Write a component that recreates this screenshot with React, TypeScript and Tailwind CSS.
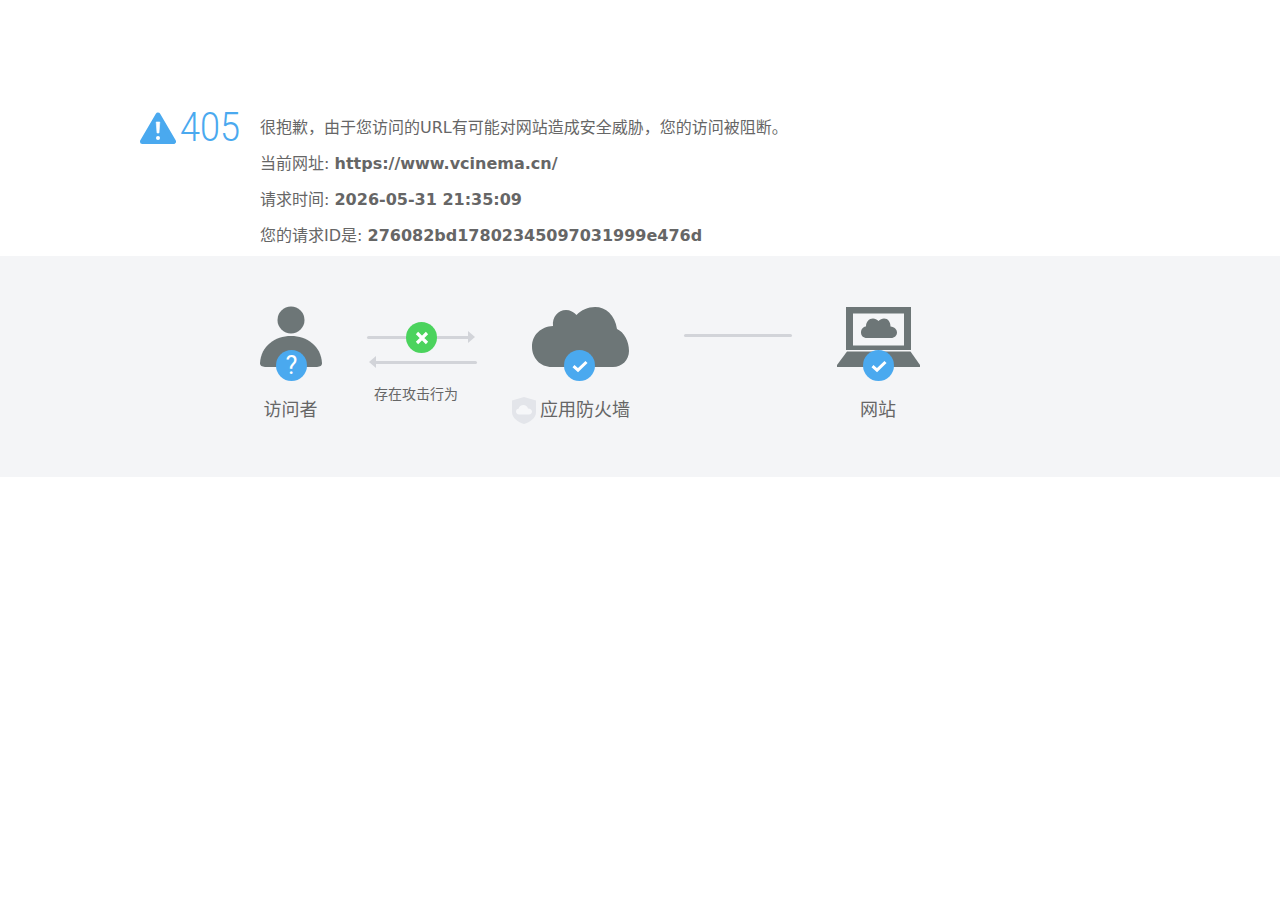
import React from "react";

const FONT = "font-['DejaVu_Sans','Noto_Sans_CJK_SC',sans-serif]";

function Badge({ kind }: { kind: "ok" | "ask" | "deny" }) {
  const bg = kind === "deny" ? "bg-[#4bd35d]" : "bg-[#4aa9ef]";
  return (
    <div className={`absolute flex h-[31px] w-[31px] items-center justify-center rounded-full ${bg}`}>
      {kind === "ask" && <span className="font-['Roboto',sans-serif] text-[25px] font-normal leading-none text-white">?</span>}
      {kind === "ok" && (
        <svg width="18" height="14" viewBox="0 0 18 14" fill="none">
          <path d="M2.5 7.2 L7 11.2 L15.5 3" stroke="#fff" strokeWidth="3" />
        </svg>
      )}
      {kind === "deny" && (
        <svg width="14" height="14" viewBox="0 0 14 14" fill="none">
          <path d="M2 2 L12 12 M12 2 L2 12" stroke="#fff" strokeWidth="3.2" />
        </svg>
      )}
    </div>
  );
}

function Warning() {
  return (
    <svg width="36" height="32" viewBox="0 0 36 32" className="shrink-0">
      <path d="M18 3 L33.5 29.5 H2.5 Z" fill="#4aa9ef" stroke="#4aa9ef" strokeWidth="5" strokeLinejoin="round" />
      <path d="M16.2 10 H19.8 L19 21 H17 Z" fill="#fff" stroke="#fff" strokeWidth="0.6" strokeLinejoin="round" />
      <circle cx="18" cy="26" r="2" fill="#fff" />
    </svg>
  );
}

function Person() {
  return (
    <svg width="62" height="61" viewBox="0 0 62 61" className="block">
      <circle cx="31" cy="14" r="13.5" fill="#6d7677" />
      <path d="M0 57 C1 40 15 30 31 30 C47 30 61 40 62 57 C62 60 60 60.5 57 61 H5 C2 60.5 0 60 0 57 Z" fill="#6d7677" />
    </svg>
  );
}

function Cloud() {
  return (
    <svg width="97" height="60" viewBox="0 0 97 60" className="block">
      <path
        d="M20 60 C8 60 0 51 0 39.5 C0 28 9 19.5 21 19 C20 10 26 3 34 3 C38 3 42 5 44.5 8 C49 3 56 0 63 0 C74 0 83 8 85 22 C92 25 97 34 97 44 C97 53 90 60 81 60 Z"
        fill="#6d7677"
      />
    </svg>
  );
}

function Laptop() {
  return (
    <svg width="83" height="60" viewBox="0 0 83 60" className="block">
      <path d="M9 0 H74 V43 H9 Z" fill="#6d7677" />
      <rect x="16" y="6.5" width="51" height="32" fill="#f4f5f7" />
      <path
        d="M30 31 C26 31 24 28.5 24 25.5 C24 22 26.5 19.5 29 19.5 C29 15 32 11.5 36 11.5 C38 11.5 40 12.5 41.5 14 C43 12.5 45 11.5 47 11.5 C51 11.5 53.5 15 53.5 19.5 C57.5 20 60 22.5 60 25.5 C60 28.5 57.5 31 54 31 Z"
        fill="#6d7677"
      />
      <path d="M10 44.5 H73.5 L83 58 V60 H0 V58 Z" fill="#6d7677" />
    </svg>
  );
}

function Shield() {
  return (
    <svg width="24" height="27" viewBox="0 0 24 27" className="block">
      <path d="M12 0 L24 3.5 V15 C24 21 18 25 12 27 C6 25 0 21 0 15 V3.5 Z" fill="#e3e5ea" />
      <path
        d="M7 17.5 C5 17.5 4 16 4 14.5 C4 13 5 12 6.5 11.8 C7 9.5 9 8 11.5 8 C13.5 8 15.5 9.3 16 11.5 C18.5 11.5 20 13 20 14.5 C20 16 19 17.5 17 17.5 Z"
        fill="#f6f7f9"
      />
    </svg>
  );
}

function Arrows() {
  return (
    <div className="w-[110px]">
      <div className="relative flex h-[62px] flex-col">
        <div className="mt-[25px] flex h-[12px] w-[108px] items-center">
          <div className="h-[3px] flex-1 rounded-l-sm bg-[#d2d4d9]" />
          <div className="h-0 w-0 border-y-[6px] border-l-[7px] border-y-transparent border-l-[#d2d4d9]" />
        </div>
        <div className="ml-[2px] mt-[13px] flex h-[12px] w-[108px] items-center">
          <div className="h-0 w-0 border-y-[6px] border-r-[7px] border-y-transparent border-r-[#d2d4d9]" />
          <div className="h-[3px] flex-1 rounded-r-sm bg-[#d2d4d9]" />
        </div>
        <div className="absolute left-[39px] top-[16px]">
          <Badge kind="deny" />
        </div>
      </div>
      <p className="mt-[14px] pr-[12px] text-center text-sm leading-[24px] text-[#666]">存在攻击行为</p>
    </div>
  );
}

export default function App() {
  return (
    <div className={`min-h-[900px] bg-white text-[#666] ${FONT}`}>
      <div className="flex pl-[140px] pt-[110px]">
        <div className="flex h-9 w-[120px] shrink-0 items-center gap-[4px] text-[#4aa9ef]">
          <Warning />
          <span className="origin-left scale-x-[0.9] font-['Roboto',sans-serif] text-[40px] font-light leading-none">405</span>
        </div>
        <div className="text-base leading-9">
          <div>很抱歉，由于您访问的URL有可能对网站造成安全威胁，您的访问被阻断。</div>
          <div>当前网址: <b>https://www.vcinema.cn/</b></div>
          <div>请求时间: <b>2026-05-31 21:35:09</b></div>
          <div>您的请求ID是: <b>276082bd17802345097031999e476d</b></div>
        </div>
      </div>

      <div className="mt-[2px] flex h-[221px] bg-[#f4f5f7] pl-[260px] pt-[50px]">
        <div className="w-[62px]">
          <div className="relative">
            <Person />
            <div className="absolute left-[16px] top-[44px]"><Badge kind="ask" /></div>
          </div>
          <p className="mt-[29px] whitespace-nowrap pr-px text-center text-lg leading-[28px]">访问者</p>
        </div>

        <div className="ml-[45px]"><Arrows /></div>

        <div className="ml-[55px] w-[97px]">
          <div className="relative pt-px">
            <Cloud />
            <div className="absolute left-[32px] top-[44px]"><Badge kind="ok" /></div>
          </div>
          <div className="-ml-[20px] mt-[29px] flex w-[118px] items-center gap-1">
            <Shield />
            <span className="whitespace-nowrap text-lg leading-[28px]">应用防火墙</span>
          </div>
        </div>

        <div className="ml-[55px] mt-[28px] h-[3px] w-[108px] rounded-sm bg-[#d2d4d9]" />

        <div className="ml-[45px] w-[83px]">
          <div className="relative mt-px">
            <Laptop />
            <div className="absolute left-[26px] top-[43px]"><Badge kind="ok" /></div>
          </div>
          <p className="mt-[29px] pr-px text-center text-lg leading-[28px]">网站</p>
        </div>
      </div>
    </div>
  );
}
